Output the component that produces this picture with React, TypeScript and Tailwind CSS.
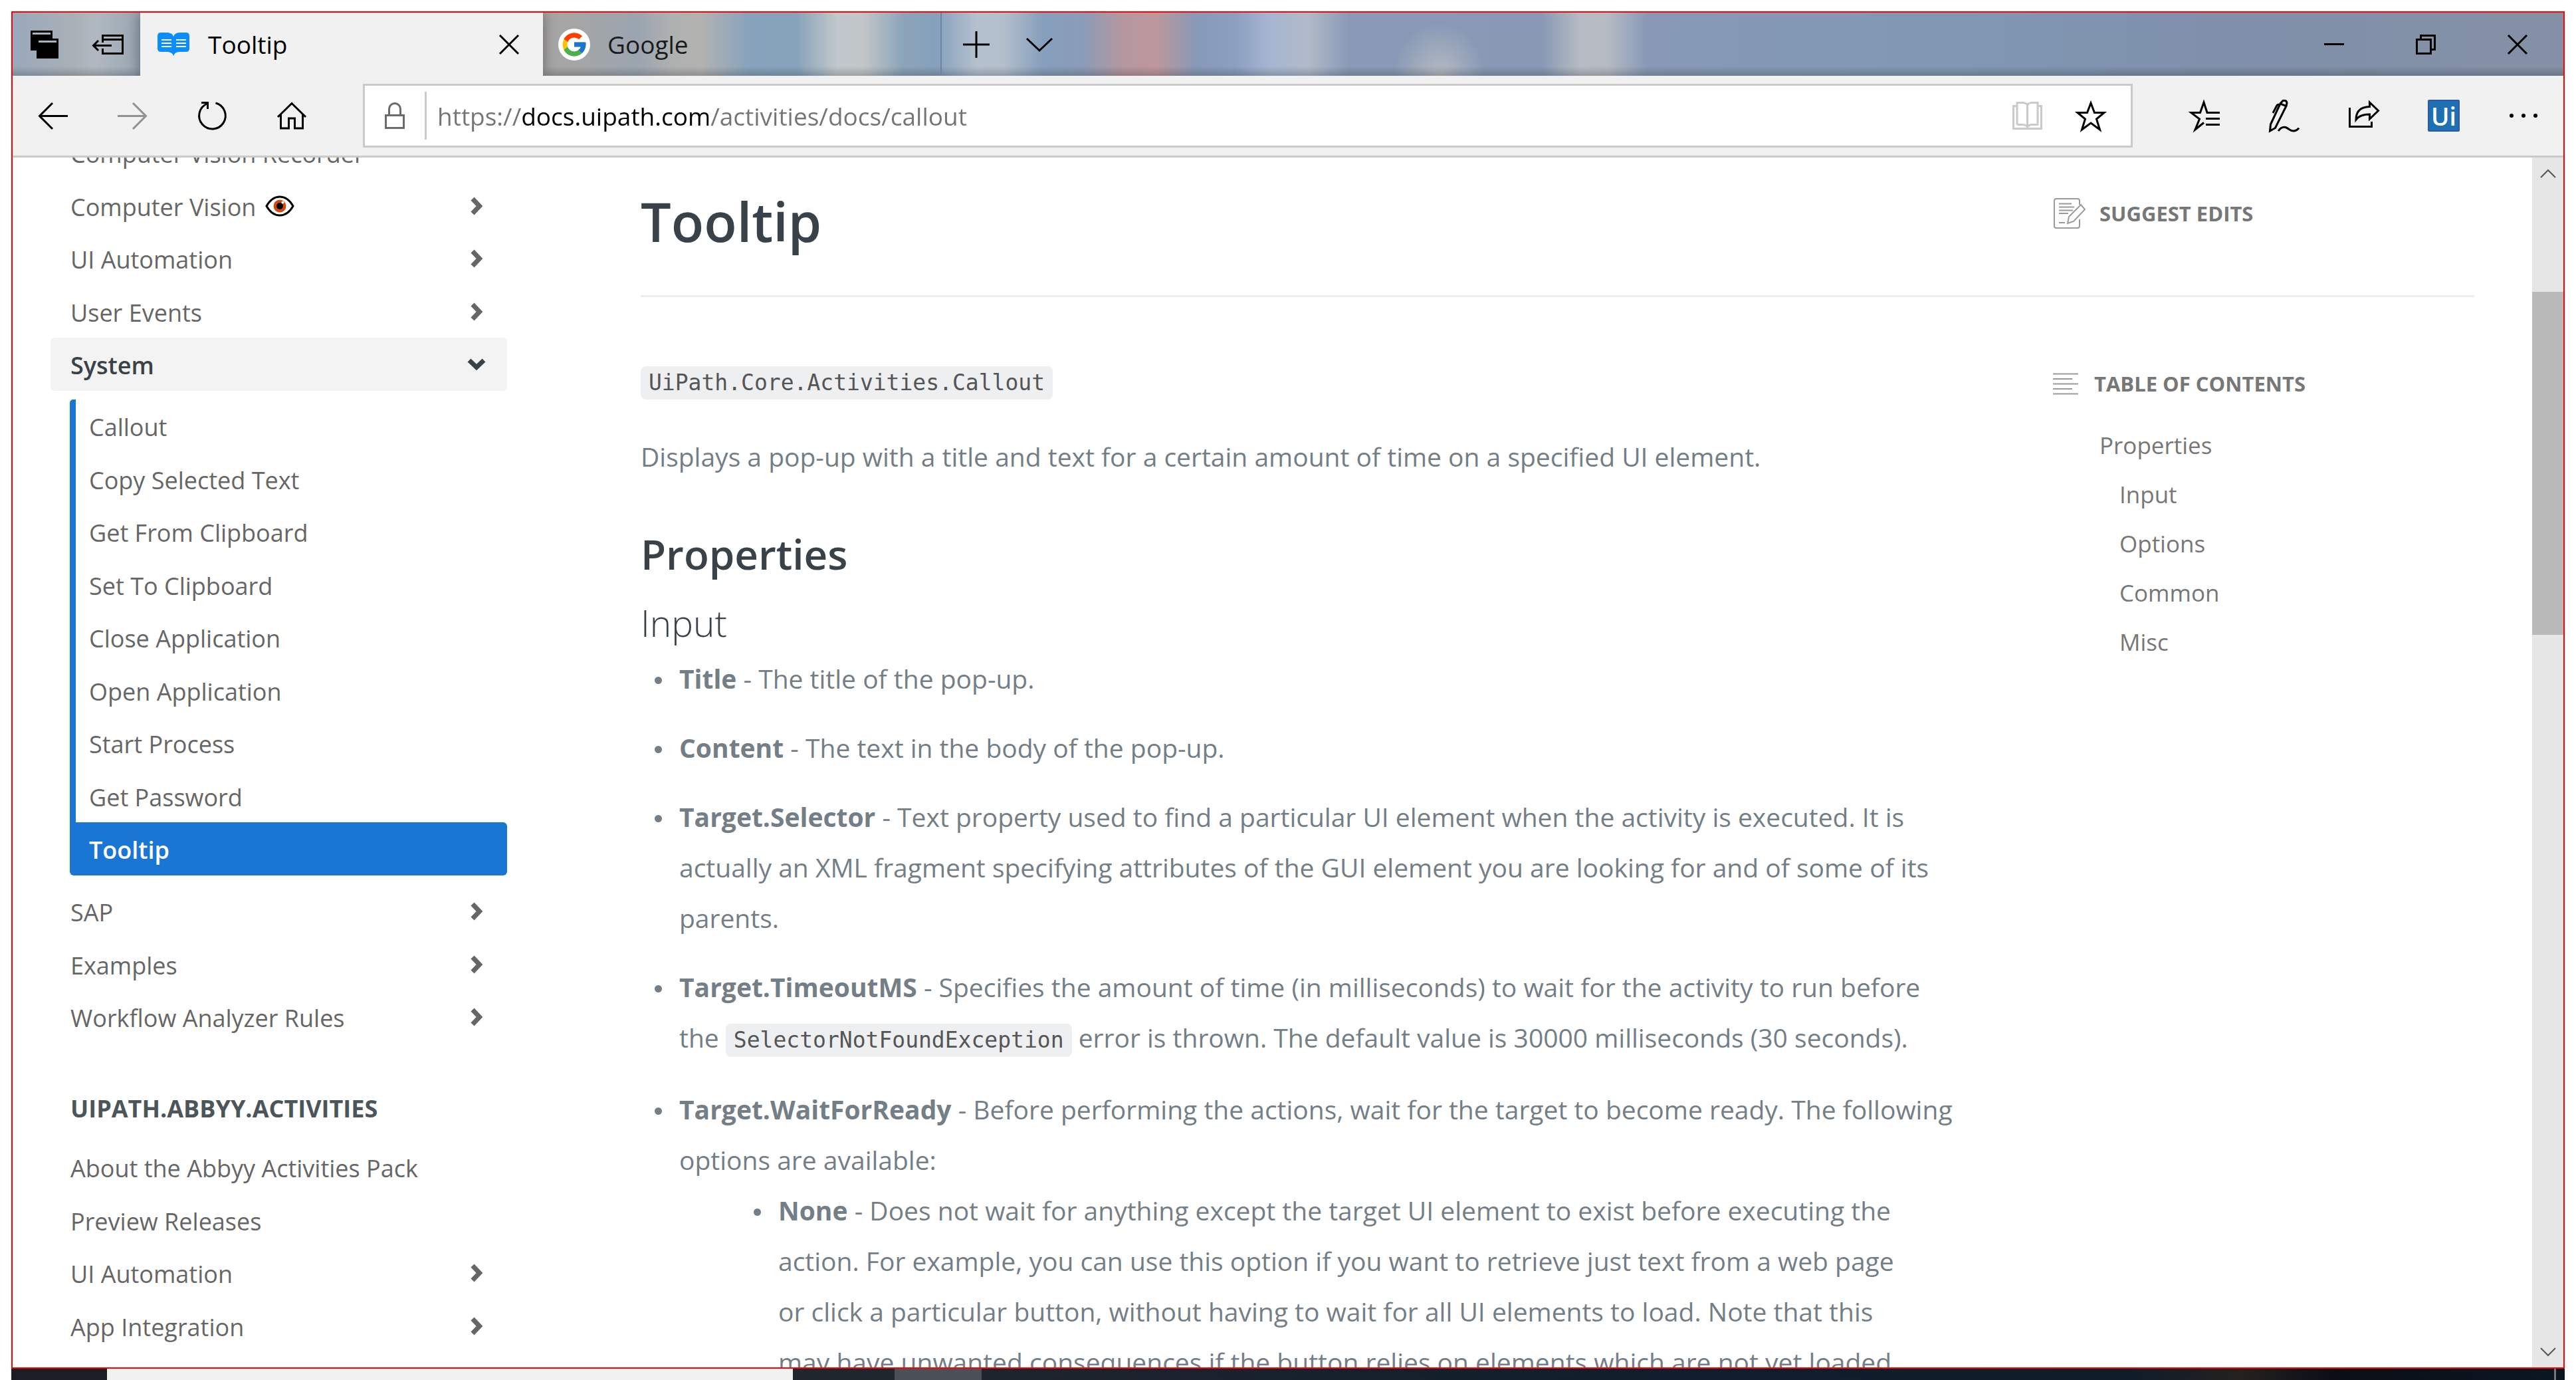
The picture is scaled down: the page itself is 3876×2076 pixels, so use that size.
import type { ReactNode } from "react";
import { FcGoogle } from "react-icons/fc";

type IconProps = { w: number; h: number; color?: string; sw?: number; children: ReactNode };

function Icon({ w, h, color = "#000", sw = 3, children }: IconProps) {
  return (
    <svg
      width={w}
      height={h}
      viewBox={`0 0 ${w} ${h}`}
      fill="none"
      stroke={color}
      strokeWidth={sw}
      className="shrink-0 overflow-visible"
      aria-hidden="true"
    >
      {children}
    </svg>
  );
}

const CloseIcon = () => (
  <Icon w={30} h={30} sw={3}>
    <path d="M1 1L29 29M29 1L1 29" />
  </Icon>
);

function ToolButton({ label, children }: { label: string; children: ReactNode }) {
  return (
    <button type="button" aria-label={label} className="flex h-full w-30 shrink-0 items-center justify-center">
      {children}
    </button>
  );
}

function TabStrip() {
  return (
    <div className="flex h-[95px] shrink-0 items-stretch bg-[linear-gradient(0deg,#00000030_0px,#00000000_14px),radial-gradient(70px_80px_at_2147px_95px,#b5bac1_0%,#b5bac100_100%),linear-gradient(90deg,#99a8bb_0px,#a9b0b7_90px,#b0b9c1_125px,#9aa6b3_191px,#a8a6a6_800px,#a5a5a6_850px,#9aa5b0_940px,#aeb0b1_990px,#b3b2b1_1035px,#86a2bc_1110px,#87a3bb_1180px,#c1c7cb_1240px,#c2c6c9_1280px,#8ba4b9_1340px,#85a0bc_1390px,#b4c0ce_1450px,#b4bfcc_1490px,#869fbc_1550px,#8a9cb9_1610px,#b5979f_1670px,#be979c_1720px,#8799b7_1780px,#8b9fc0_1840px,#a5b5d1_1890px,#b1bac8_1950px,#889ab7_2010px,#8799b5_2300px,#b7bcc4_2360px,#b5bac3_2400px,#8799b7_2460px,#8098b4_2900px,#7f90ab_3300px,#8490a5_3838px)] text-[37px]">
      <button type="button" aria-label="Tabs you've set aside" className="flex w-24 shrink-0 items-center justify-center">
        <Icon w={42} h={42} sw={0}>
          <path fill="#000" d="M0 0H33V30H0Z" />
          <path fill="#a9b3bf" d="M3 3H30V6H3Z" />
          <path fill="#000" d="M9 12H42V42H9Z" />
          <path fill="#a9b3bf" d="M12 15H39V18H12Z" />
        </Icon>
      </button>
      <button type="button" aria-label="Set these tabs aside" className="flex w-24 shrink-0 items-center justify-center">
        <Icon w={48} h={30}>
          <path d="M15.5 12V1.5H45.5V28.5H15.5V21M14 7.5H47M2 16.5H29M9 9L1.500 16.500L9 24" />
        </Icon>
      </button>

      <div className="flex w-[606px] shrink-0 items-center bg-[#f1f1f1] pr-9 pl-[26px] shadow-[0_0_20px_rgba(0,0,0,0.4)]">
        <Icon w={48} h={35} sw={0}>
          <path
            fill="#0a8dff"
            d="M5 0H15Q22 0 24 6Q26 0 33 0H43Q48 0 48 5V24Q48 29 43 29H33Q26 29 24 35Q22 29 15 29H5Q0 29 0 24V5Q0 0 5 0Z"
          />
          <path fill="#fff" d="M6 10H21V12H6ZM6 15H21V17H6ZM6 20H21V22H6ZM28 10H43V12H28ZM28 15H43V17H28ZM28 20H43V22H28Z" />
        </Icon>
        <span className="ml-7 flex-1 text-black">Tooltip</span>
        <button type="button" aria-label="Close tab">
          <CloseIcon />
        </button>
      </div>

      <div className="flex w-[600px] shrink-0 items-center border-r-2 border-[#6f84a0] pl-[23px]">
        <span className="flex size-12 shrink-0 items-center justify-center rounded-full bg-white">
          <FcGoogle size={42} />
        </span>
        <span className="ml-[26px] text-[#1b1b1b]">Google</span>
      </div>

      <button type="button" aria-label="New tab" className="flex w-[104px] shrink-0 items-center justify-center">
        <Icon w={40} h={40}>
          <path d="M0 20H40M20 0V40" />
        </Icon>
      </button>
      <button type="button" aria-label="Show tab previews" className="flex w-[86px] shrink-0 items-center justify-center">
        <Icon w={40} h={20}>
          <path d="M1 1L20 19L39 1" />
        </Icon>
      </button>

      <div className="ml-auto flex shrink-0">
        <button type="button" aria-label="Minimize" className="flex w-[138px] items-center justify-center">
          <Icon w={30} h={3}>
            <path d="M0 1.500H30" />
          </Icon>
        </button>
        <button type="button" aria-label="Restore" className="flex w-[138px] items-center justify-center">
          <Icon w={30} h={30}>
            <path d="M1.500 7.500H22.500V28.500H1.500ZM7.500 7V1.500H28.500V22.500H23" />
          </Icon>
        </button>
        <button type="button" aria-label="Close" className="flex w-[138px] items-center justify-center">
          <CloseIcon />
        </button>
      </div>
    </div>
  );
}

function Toolbar() {
  return (
    <div className="relative flex h-[123px] shrink-0 items-center border-b-3 border-[#cacaca] bg-[#f1f1f1]">
      <ToolButton label="Back">
        <Icon w={45} h={41}>
          <path d="M3 20.500H45M22 1L2.500 20.500L22 40" />
        </Icon>
      </ToolButton>
      <ToolButton label="Forward">
        <Icon w={45} h={41} color="#919191">
          <path d="M42 20.500H0M23 1L42.500 20.500L23 40" />
        </Icon>
      </ToolButton>
      <ToolButton label="Refresh">
        <Icon w={42} h={42}>
          <path d="M26.500 2A19.800 19.800 0 1 1 13.500 3M5 1.500H14.500V11" />
        </Icon>
      </ToolButton>
      <ToolButton label="Home">
        <Icon w={44} h={41}>
          <path d="M1 22L22 1.500L43 22M5.500 18V39H17.500V24H26.500V39H38.500V18" />
        </Icon>
      </ToolButton>

      <div className="mr-12 ml-[47px] flex h-24 min-w-0 flex-1 items-center border-3 border-[#cacaca] bg-white pr-3">
        <button type="button" aria-label="View site information" className="flex h-full w-[90px] shrink-0 items-center justify-center">
          <Icon w={30} h={40} color="#6b6b6b">
            <path d="M1.500 19.500H28.500V38.500H1.500ZM6.500 19V10A8.500 8.500 0 0 1 23.500 10V19" />
          </Icon>
        </button>
        <span className="h-18 w-[3px] shrink-0 bg-[#cacaca]" />
        <input
          type="text"
          aria-label="Address"
          defaultValue="https://docs.uipath.com/activities/docs/callout"
          className="ml-4 h-full min-w-0 flex-1 bg-[linear-gradient(90deg,#757575_128px,#000_128px,#000_408px,#757575_408px)] bg-clip-text text-[37px] text-transparent outline-none"
        />
        <button type="button" aria-label="Reading view" className="flex h-full w-24 shrink-0 items-center justify-center">
          <Icon w={45} h={42} color="#cacaca">
            <path d="M7 6.500H1.500V40.500H43.500V6.500H38M7 34.500V1.500H16Q22.500 2 22.500 6.500Q22.500 2 29 1.500H38V34.500H29Q24 35 22.500 38Q21 35 16 34.500H7M22.500 5V38" />
          </Icon>
        </button>
        <button type="button" aria-label="Add to favorites" className="flex h-full w-24 shrink-0 items-center justify-center">
          <Icon w={48} h={48}>
            <path d="M24 5L29.500 19.500H44L32.500 29L37.500 45L24 35L10.500 45L15.500 29L4 19.500H18.500Z" />
          </Icon>
        </button>
      </div>

      <ToolButton label="Favorites">
        <Icon w={48} h={48}>
          <path d="M47 19.500H28L23 4L17.500 19.500H4L16.500 29L10 45L23 34.500M26 28.500H47M26 37.500H47" />
        </Icon>
      </ToolButton>
      <ToolButton label="Add notes">
        <Icon w={47} h={48}>
          <path d="M17 6L2.500 37L1.500 47L9.500 42.500L26 9.500ZM17 6L21 1.500Q27 0.500 27 5L26 9.500M6 20L12 8.500Q13.500 6.500 17 8M14 47Q19 40 25 41.500C30 43 32 48 38 47Q43 46 45 42.500" />
        </Icon>
      </ToolButton>
      <ToolButton label="Share">
        <Icon w={47} h={48}>
          <path d="M1.500 12V40.500H34.500V33M31.500 4L44.500 16.500L31.500 29V22Q17 22 11 30Q11 11 31.500 10.500Z" />
        </Icon>
      </ToolButton>
      <ToolButton label="UiPath extension">
        <span className="flex size-12 items-center justify-center rounded-xs border-2 border-[#2c58a8] bg-[#1f6fb3] text-[37px] leading-none font-semibold text-white">
          Ui
        </span>
      </ToolButton>
      <ToolButton label="Settings and more">
        <Icon w={42} h={6} sw={0}>
          <circle cx="3" cy="3" r="3" fill="#000" />
          <circle cx="21" cy="3" r="3" fill="#000" />
          <circle cx="39" cy="3" r="3" fill="#000" />
        </Icon>
      </ToolButton>
    </div>
  );
}

type NavItem = { label: string; expandable?: boolean; eye?: boolean };

const topItems: NavItem[] = [
  { label: "Computer Vision Recorder" },
  { label: "Computer Vision", expandable: true, eye: true },
  { label: "UI Automation", expandable: true },
  { label: "User Events", expandable: true },
];
const systemPages = [
  "Callout",
  "Copy Selected Text",
  "Get From Clipboard",
  "Set To Clipboard",
  "Close Application",
  "Open Application",
  "Start Process",
  "Get Password",
];
const moreItems: NavItem[] = [
  { label: "SAP", expandable: true },
  { label: "Examples", expandable: true },
  { label: "Workflow Analyzer Rules", expandable: true },
];
const abbyyItems: NavItem[] = [
  { label: "About the Abbyy Activities Pack" },
  { label: "Preview Releases" },
  { label: "UI Automation", expandable: true },
  { label: "App Integration", expandable: true },
];

function Eye() {
  return (
    <Icon w={44} h={32}>
      <path fill="#fff" d="M2 16Q10 2 22 2T42 16Q34 30 22 30T2 16Z" />
      <circle cx="22" cy="16" r="9.500" fill="#cf4a0c" stroke="none" />
      <circle cx="22" cy="16" r="5" fill="#000" stroke="none" />
      <circle cx="26.500" cy="10.500" r="2" fill="#fff" stroke="none" />
    </Icon>
  );
}

function NavList({ items }: { items: NavItem[] }) {
  return (
    <ul>
      {items.map((item) => (
        <li key={item.label} className="odd:h-20 even:h-[79px]">
          <a href="#" className="flex h-full items-center pr-8 pl-[30px]">
            <span className="pt-1">{item.label}</span>
            {item.eye && (
              <span className="ml-3.5">
                <Eye />
              </span>
            )}
            {item.expandable && (
              <span className="ml-auto">
                <Icon w={28} h={28} color="#666" sw={7}>
                  <path d="M8 3L18.500 14L8 25" />
                </Icon>
              </span>
            )}
          </a>
        </li>
      ))}
    </ul>
  );
}

function Sidebar() {
  return (
    <nav aria-label="Documentation" className="ml-[57px] w-[687px] shrink-0 text-[#666]">
      <div className="-mt-[47px]">
        <NavList items={topItems} />
      </div>
      <button
        type="button"
        aria-expanded="true"
        className="flex h-20 w-full items-center justify-between rounded-md bg-[#f3f3f3] pr-8 pl-[30px] font-semibold text-[#384248]"
      >
        <span className="pt-1">System</span>
        <Icon w={28} h={28} color="#384248" sw={7}>
          <path d="M3 8L14 18.500L25 8" />
        </Icon>
      </button>
      <ul className="mt-[13px] ml-[29px]">
        {systemPages.map((page) => (
          <li key={page} className="border-l-9 border-[#1a76d4] first:rounded-tl-[5px] odd:h-20 even:h-[79px]">
            <a href="#" className="flex h-full items-center pl-5">
              <span className="pt-1">{page}</span>
            </a>
          </li>
        ))}
        <li className="h-20">
          <a
            href="#"
            aria-current="page"
            className="flex h-full items-center rounded-md rounded-tl-none bg-[#1a76d4] pl-[29px] font-semibold text-white"
          >
            <span className="pt-1">Tooltip</span>
          </a>
        </li>
      </ul>
      <div className="mt-3.5">
        <NavList items={moreItems} />
      </div>
      <h2 className="mt-[58px] flex h-20 items-center pl-[30px] font-bold text-[#4c555a]">UIPATH.ABBYY.ACTIVITIES</h2>
      <div className="mt-2">
        <NavList items={abbyyItems} />
      </div>
    </nav>
  );
}

function Code({ children }: { children: ReactNode }) {
  return (
    <code className="inline-block rounded-lg bg-[#eeeff1] px-3 font-['DejaVu_Sans_Mono',monospace] text-[33px] leading-[50px] text-[#555]">
      {children}
    </code>
  );
}

const bullet =
  "relative before:absolute before:top-[35px] before:-left-[37px] before:size-[11px] before:rounded-full before:bg-[#747e87]";

function Article() {
  return (
    <article className="w-[1974px] pt-26 text-[39px] leading-[76px] text-[#747e87]">
      <div className="flex">
        <Code>UiPath.Core.Activities.Callout</Code>
      </div>
      <p className="mt-12">
        Displays a pop-up with a title and text for a certain amount of time on a specified UI element.
      </p>
      <h2 className="mt-18 text-[62px] leading-[72px] font-semibold text-[#384248]">Properties</h2>
      <h3 className="mt-9 text-[55px] leading-[64px] font-light text-[#384248]">Input</h3>
      <ul className="mt-3.5 ml-[58px]">
        <li className={`${bullet} mb-7`}>
          <strong>Title</strong> - The title of the pop-up.
        </li>
        <li className={`${bullet} mb-7`}>
          <strong>Content</strong> - The text in the body of the pop-up.
        </li>
        <li className={`${bullet} mb-7`}>
          <strong>Target.Selector</strong> - Text property used to find a particular UI element when the activity is
          executed. It is actually an XML fragment specifying attributes of the GUI element you are looking for and of
          some of its parents.
        </li>
        <li className={`${bullet} mb-8`}>
          <strong>Target.TimeoutMS</strong> - Specifies the amount of time (in milliseconds) to wait for the activity to
          run before the <Code>SelectorNotFoundException</Code> error is thrown. The default value is 30000 milliseconds
          (30 seconds).
        </li>
        <li className={bullet}>
          <strong>Target.WaitForReady</strong> - Before performing the actions, wait for the target to become ready. The
          following options are available:
          <ul className="mr-[76px] ml-[149px]">
            <li className={bullet}>
              <strong>None</strong> - Does not wait for anything except the target UI element to exist before executing
              the action. For example, you can use this option if you want to retrieve just text from a web page or
              click a particular button, without having to wait for all UI elements to load. Note that this may have
              unwanted consequences if the button relies on elements which are not yet loaded
            </li>
          </ul>
        </li>
      </ul>
    </article>
  );
}

function TableOfContents() {
  return (
    <aside className="w-[634px] shrink-0 pt-[106px] text-[#777]">
      <h2 className="flex h-12 items-center gap-6 text-[31px] font-bold">
        <Icon w={38} h={33} color="#9a9a9a" sw={2}>
          <path d="M0 1.500H38M0 9H29M0 16.500H38M0 24H29M0 31.500H38" />
        </Icon>
        TABLE OF CONTENTS
      </h2>
      <ul className="mt-8 ml-[70px] text-[35px] leading-[74px]">
        <li>
          <a href="#properties">Properties</a>
          <ul className="ml-[30px]">
            {["Input", "Options", "Common", "Misc"].map((section) => (
              <li key={section}>
                <a href="#properties">{section}</a>
              </li>
            ))}
          </ul>
        </li>
      </ul>
    </aside>
  );
}

function PageContent() {
  return (
    <main className="ml-[201px] min-w-0 flex-1 pr-[87px]">
      <header className="flex items-start justify-between border-b-3 border-[#eee] pt-14 pb-[71px]">
        <h1 className="text-[81px] leading-20 font-semibold text-[#384248]">Tooltip</h1>
        <div className="w-[634px] shrink-0">
          <a href="#suggest" className="mt-1 flex h-12 items-center gap-5 text-[31px] font-bold text-[#777]">
            <Icon w={50} h={46} color="#9a9a9a" sw={2}>
              <path d="M40 10V4Q40 1 37 1H5Q2 1 2 4V42Q2 45 5 45H37Q40 45 40 42V32M9 8.500H28M9 13.500H32M9 18.500H30M9 23H23M9 37H18M22 38L24 28L42 10L48 17L31 35Z" />
            </Icon>
            SUGGEST EDITS
          </a>
        </div>
      </header>
      <div className="flex items-start justify-between">
        <Article />
        <TableOfContents />
      </div>
    </main>
  );
}

function Scrollbar() {
  return (
    <div className="flex w-[47px] shrink-0 flex-col bg-[#e6e6e6]">
      <button type="button" aria-label="Scroll up" className="flex h-12 shrink-0 items-center justify-center">
        <Icon w={24} h={13} color="#555" sw={2}>
          <path d="M1 12L12 1L23 12" />
        </Icon>
      </button>
      <div className="flex-1">
        <div className="mt-[154px] h-[516px] bg-[#b9b9b9]" />
      </div>
      <button type="button" aria-label="Scroll down" className="flex h-12 shrink-0 items-center justify-center">
        <Icon w={24} h={13} color="#555" sw={2}>
          <path d="M1 1L12 12L23 1" />
        </Icon>
      </button>
    </div>
  );
}

export default function App() {
  return (
    <div className="flex h-screen flex-col overflow-hidden bg-white pt-[17px] pr-[17px] pl-[17px] font-['Open_Sans','Noto_Sans',sans-serif] text-[36px] leading-normal">
      <div className="flex min-h-0 flex-1 flex-col overflow-hidden border-2 border-[#ff0000]">
        <TabStrip />
        <Toolbar />
        <div className="flex min-h-0 flex-1 items-stretch overflow-hidden bg-white">
          <Sidebar />
          <PageContent />
          <Scrollbar />
        </div>
      </div>
      <div className="flex h-[17px] shrink-0 bg-[#11161f]">
        <div className="w-36 bg-[#1b1e24]" />
        <div className="w-[1032px] bg-[#f1f1f1]" />
        <div className="w-[153px] bg-[#1f262e]" />
        <div className="w-[131px] bg-[#4b4f58]" />
        <div className="flex-1 bg-[linear-gradient(90deg,#1d242d_0%,#101d2c_45%,#0f1c2a_73%,#24211f_80%,#0b0e16_86%,#0a1622_100%)]" />
        <div className="w-[3px] bg-[#777]" />
        <div className="w-[13px] bg-[#0a141f]" />
      </div>
    </div>
  );
}
